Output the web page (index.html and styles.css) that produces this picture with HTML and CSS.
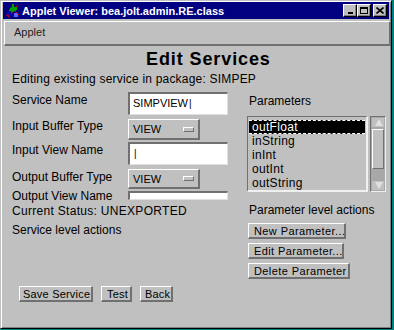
FILE: index.html
```html
<!DOCTYPE html>
<html lang="en">
<head>
    <meta charset="UTF-8">
    <title>Applet Viewer</title>
    <link rel="stylesheet" href="styles.css">
</head>
<body>
<div class="window">
    <div class="titlebar">
        <svg class="app-icon" width="15" height="15" viewBox="0 0 15 15">
            <path d="M3 14 L12 3" stroke="#d00000" stroke-width="1.5"/>
            <path d="M7 1 L9 1 L9 4 L12 4 L12 7 L8 9 L4 8 L5 5 L7 4 Z" fill="#00a000"/>
            <path d="M2 9 L6 9 L6 13 L2 13 Z" fill="#0000c0"/>
            <path d="M9 10 L13 10 L13 14 L9 14 Z" fill="#6060ff"/>
            <path d="M1 12 L4 12 M10 8 L14 12" stroke="#d00000" stroke-width="1"/>
        </svg>
        <span class="title">Applet Viewer: bea.jolt.admin.RE.class</span>
        <div class="win-btns">
            <span class="win-btn"><span class="min-glyph"></span></span>
            <span class="win-btn"><span class="max-glyph"></span></span>
            <span class="win-btn close">
                <svg width="8" height="7" viewBox="0 0 8 7"><path d="M0.5 0.5 L7.5 6.5 M7.5 0.5 L0.5 6.5" stroke="#000" stroke-width="1.6"/></svg>
            </span>
        </div>
    </div>

    <div class="menubar"><span>Applet</span></div>

    <div class="applet">
        <h1>Edit Services</h1>
        <p class="editing">Editing existing service in package: SIMPEP</p>

        <div class="columns">
            <div class="left">
                <div class="row row-a">
                    <label>Service Name</label>
                    <div class="field tall">SIMPVIEW<span class="caret">|</span></div>
                </div>
                <div class="row row-b">
                    <label>Input Buffer Type</label>
                    <div class="choice"><span>VIEW</span><span class="indicator"></span></div>
                </div>
                <div class="row row-c">
                    <label>Input View Name</label>
                    <div class="field tall"><span class="caret">|</span></div>
                </div>
                <div class="row row-d">
                    <label>Output Buffer Type</label>
                    <div class="choice"><span>VIEW</span><span class="indicator"></span></div>
                </div>
                <div class="row row-e">
                    <label>Output View Name</label>
                    <div class="field short"></div>
                </div>
                <p class="status">Current Status: UNEXPORTED</p>
                <p class="actions-label">Service level actions</p>
            </div>

            <div class="right">
                <p class="params-label">Parameters</p>
                <div class="list-wrap">
                    <ul class="list">
                        <li class="selected">outFloat</li>
                        <li>inString</li>
                        <li>inInt</li>
                        <li>outInt</li>
                        <li>outString</li>
                    </ul>
                    <div class="scrollbar">
                        <span class="arrow up"></span>
                        <span class="thumb"></span>
                        <span class="trough"></span>
                        <span class="arrow down"></span>
                    </div>
                </div>
                <p class="param-actions">Parameter level actions</p>
                <button class="btn w-new">New Parameter...</button>
                <button class="btn w-edit">Edit Parameter...</button>
                <button class="btn w-del">Delete Parameter</button>
            </div>
        </div>

        <div class="bottom-buttons">
            <button class="btn w-save">Save Service</button>
            <button class="btn w-test">Test</button>
            <button class="btn w-back">Back</button>
        </div>
    </div>
</div>
</body>
</html>
```

FILE: styles.css
```css
body {
    margin: 0;
    background: #008080;
    font-family: "Liberation Sans", Arial, sans-serif;
    font-size: 12px;
    color: #000;
}
p {
    margin: 0;
}
.window {
    width: 392px;
    height: 329px;
    box-sizing: border-box;
    background: #c0c0c0;
    border-top: 1px solid #c0c0c0;
    border-left: 1px solid #c0c0c0;
    border-right: 1px solid #000;
    border-bottom: 1px solid #000;
    box-shadow: inset 1px 1px 0 #fff, inset -1px -1px 0 #808080;
    padding: 1px 2px 0 2px;
    overflow: hidden;
}
.titlebar {
    height: 17px;
    background: #000080;
    display: flex;
    align-items: center;
    padding-left: 2px;
}
.app-icon {
    flex: none;
}
.title {
    color: #fff;
    font-weight: bold;
    font-size: 11px;
    margin-left: 2px;
    white-space: nowrap;
}
.win-btns {
    margin-left: auto;
    display: flex;
    margin-right: 2px;
}
.win-btn {
    width: 14px;
    height: 13px;
    box-sizing: border-box;
    background: #c0c0c0;
    border-top: 1px solid #fff;
    border-left: 1px solid #fff;
    border-right: 1px solid #000;
    border-bottom: 1px solid #000;
    box-shadow: inset -1px -1px 0 #808080;
    display: flex;
    align-items: center;
    justify-content: center;
}
.win-btn.close {
    margin-left: 2px;
}
.min-glyph {
    width: 5px;
    height: 2px;
    background: #000;
    margin-top: 5px;
}
.max-glyph {
    width: 8px;
    height: 7px;
    box-sizing: border-box;
    border: 1px solid #000;
    border-top-width: 2px;
}
.menubar {
    margin: 2px 0 0 1px;
    width: 387px;
    height: 25px;
    box-sizing: border-box;
    border-top: 1px solid #fff;
    border-left: 1px solid #fff;
    border-right: 2px solid #707070;
    border-bottom: 2px solid #707070;
    padding: 4px 0 0 9px;
    font-size: 11px;
    color: #222;
}
.applet {
    padding: 0 0 0 9px;
}
h1 {
    margin: 3px 0 0 134px;
    font-size: 18px;
    line-height: 20px;
    letter-spacing: 0.9px;
    height: 20px;
}
.editing {
    margin-top: 3px;
    line-height: 14px;
    white-space: nowrap;
    letter-spacing: 0.2px;
}
.columns {
    display: flex;
    margin-top: 6px;
}
.left {
    width: 235px;
    flex: none;
}
.row {
    display: flex;
    align-items: flex-start;
}
.row label {
    width: 116px;
    flex: none;
    line-height: 14px;
    margin-top: 1px;
}
.row-b { margin-top: 4px; }
.row-b label { margin-top: 0; }
.row-c { margin-top: 2px; }
.row-d { margin-top: 4px; }
.row-e label { margin-top: 0; }
.field {
    width: 100px;
    box-sizing: border-box;
    background: #fff;
    border-top: 2px solid #707070;
    border-left: 2px solid #707070;
    border-right: 1px solid #e0e0e0;
    border-bottom: 1px solid #e0e0e0;
    padding-left: 3px;
    font-size: 11px;
    line-height: 19px;
    overflow: hidden;
    white-space: nowrap;
}
.field.tall {
    height: 23px;
}
.field.short {
    height: 9px;
    margin-top: 2px;
}
.caret {
    font-size: 10px;
    margin-left: 1px;
}
.choice {
    width: 72px;
    height: 21px;
    box-sizing: border-box;
    border-top: 1px solid #fff;
    border-left: 1px solid #fff;
    border-right: 2px solid #707070;
    border-bottom: 2px solid #707070;
    display: flex;
    align-items: center;
    padding-left: 4px;
    font-size: 11px;
}
.row-d .choice {
    height: 20px;
}
.indicator {
    width: 11px;
    height: 5px;
    box-sizing: border-box;
    border-top: 1px solid #fff;
    border-left: 1px solid #fff;
    border-right: 1px solid #707070;
    border-bottom: 1px solid #707070;
    margin-left: auto;
    margin-right: 4px;
}
.status {
    margin-top: 1px;
    line-height: 14px;
    letter-spacing: 0.3px;
}
.actions-label {
    margin-top: 5px;
    line-height: 14px;
}
.right {
    flex: none;
    width: 145px;
}
.params-label {
    margin: 2px 0 0 2px;
    line-height: 14px;
}
.list-wrap {
    display: flex;
    margin-top: 8px;
    height: 76px;
}
.list {
    list-style: none;
    margin: 0;
    padding: 3px 1px 0 1px;
    width: 121px;
    box-sizing: border-box;
    border-top: 1px solid #707070;
    border-left: 1px solid #707070;
    border-right: 2px solid #f0f0f0;
    border-bottom: 2px solid #f0f0f0;
}
.list li {
    height: 14px;
    line-height: 14px;
    padding-left: 3px;
    letter-spacing: 0.3px;
}
.list li.selected {
    background: #000;
    color: #fff;
    box-sizing: border-box;
    border-top: 1px dashed #fff;
    border-bottom: 1px dashed #fff;
    line-height: 12px;
}
.scrollbar {
    width: 16px;
    margin-left: 2px;
    box-sizing: border-box;
    border-top: 1px solid #707070;
    border-left: 1px solid #707070;
    border-right: 1px solid #f0f0f0;
    border-bottom: 1px solid #f0f0f0;
    display: flex;
    flex-direction: column;
    padding: 1px;
    background: #a8a8a8;
}
.arrow {
    height: 9px;
    display: block;
    position: relative;
    background: #c0c0c0;
}
.arrow::after {
    content: "";
    position: absolute;
    left: 3px;
    border-left: 4px solid transparent;
    border-right: 4px solid transparent;
}
.arrow.up::after {
    top: 1px;
    border-bottom: 7px solid #e0e0e0;
}
.arrow.down::after {
    top: 1px;
    border-top: 7px solid #e0e0e0;
}
.thumb {
    display: block;
    height: 40px;
    margin-top: 2px;
    box-sizing: border-box;
    background: #c0c0c0;
    border-top: 1px solid #fff;
    border-left: 1px solid #fff;
    border-right: 1px solid #707070;
    border-bottom: 1px solid #707070;
}
.trough {
    flex: 1;
}
.param-actions {
    margin: 11px 0 0 2px;
    line-height: 14px;
}
.btn {
    display: block;
    font-family: "Liberation Sans", Arial, sans-serif;
    font-size: 11px;
    letter-spacing: 0.4px;
    height: 16px;
    line-height: 12px;
    padding: 0 0 0 5px;
    text-align: left;
    background: #c0c0c0;
    color: #000;
    box-sizing: border-box;
    border-top: 1px solid #fff;
    border-left: 1px solid #fff;
    border-right: 2px solid #707070;
    border-bottom: 2px solid #707070;
    white-space: nowrap;
    overflow: hidden;
}
.right .btn {
    margin-top: 4px;
    margin-left: 1px;
}
.right .w-new { margin-top: 6px; }
.w-new { width: 98px; }
.w-edit { width: 96px; }
.w-del { width: 102px; }
.bottom-buttons {
    display: flex;
    gap: 8px;
    margin: 7px 0 0 7px;
}
.bottom-buttons .btn {
    padding-left: 3px;
    letter-spacing: 0.2px;
}
.w-save { width: 74px; }
.w-test { width: 31px; }
.bottom-buttons .w-test { padding-left: 5px; }
.w-back { width: 33px; }
.bottom-buttons .w-back { padding-left: 4px; }
```
